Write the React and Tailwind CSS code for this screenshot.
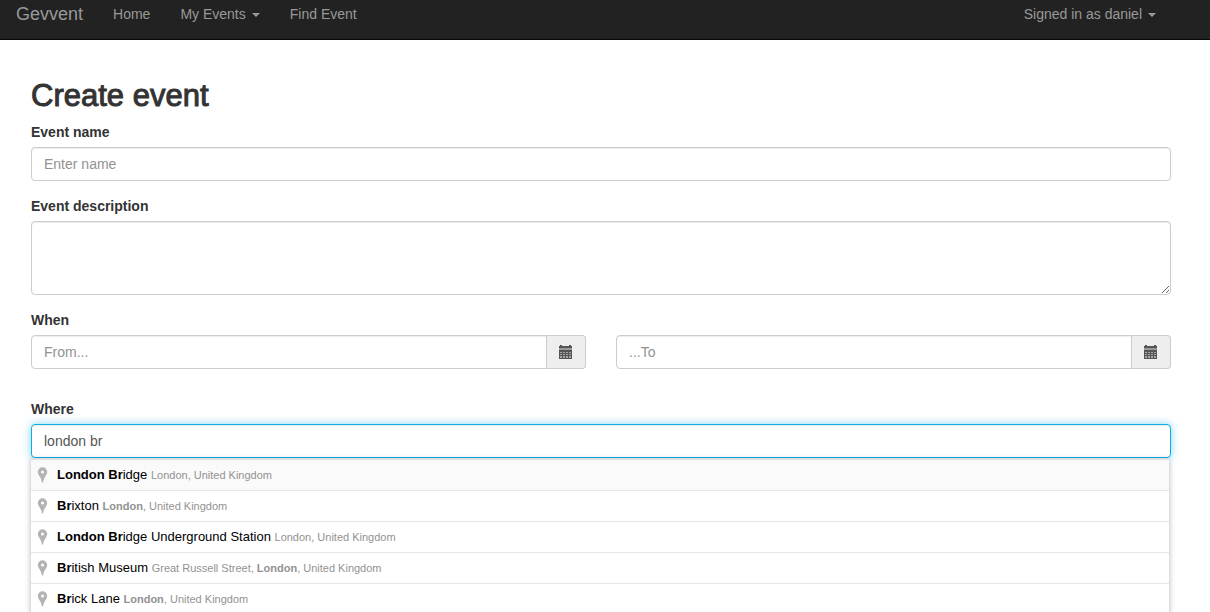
const places = [
  { name: [["London Br", true], ["idge", false]], area: [["London, United Kingdom", false]], active: true },
  { name: [["Br", true], ["ixton", false]], area: [["London", true], [", United Kingdom", false]] },
  { name: [["London Br", true], ["idge Underground Station", false]], area: [["London, United Kingdom", false]] },
  { name: [["Br", true], ["itish Museum", false]], area: [["Great Russell Street, ", false], ["London", true], [", United Kingdom", false]] },
  { name: [["Br", true], ["ick Lane", false]], area: [["London", true], [", United Kingdom", false]] },
];

const label = "mb-[5px] block font-bold";
const control =
  "block w-full rounded border border-[#ccc] bg-white px-3 text-[#555] shadow-[inset_0_1px_1px_rgba(0,0,0,0.075)] outline-none placeholder:text-[#929292]";

function Caret() {
  return (
    <svg className="ml-1.5 inline-block h-1 w-2 align-middle" viewBox="0 0 8 4" fill="currentColor" aria-hidden="true">
      <path d="M0 0h8L4 4z" />
    </svg>
  );
}

function CalendarIcon() {
  return (
    <svg className="h-[14px] w-[14px]" viewBox="0 0 14 14" aria-hidden="true">
      <path d="M1 0h2v1h7V0h2v1h1v2H0V1h1z" fill="#555" />
      <path d="M0 3h13v2H0z" fill="#999" />
      <path d="M0 5h13v9H0z" fill="#555" />
      <path
        d="M1 7h2v1H1zM4 7h2v1H4zM7 7h2v1H7zM10 7h2v1h-2zM1 9h2v1H1zM4 9h2v1H4zM7 9h2v1H7zM10 9h2v1h-2zM1 11h2v2H1zM4 11h2v2H4zM7 11h2v2H7zM10 11h2v2h-2z"
        fill="#a5a5a5"
      />
    </svg>
  );
}

function PinIcon() {
  return (
    <svg className="h-4 w-[11px] shrink-0" viewBox="0 0 11 16" fill="#b3b3b3" aria-hidden="true">
      <path
        fillRule="evenodd"
        d="M5.500 0.300A4.700 4.700 0 0 0 .8 5c0 2 1.200 3.200 2.200 4.900C4 11.600 4.700 13 4.900 15.500h1.200C6.300 13 7 11.600 8 9.900 9 8.200 10.200 7 10.200 5A4.700 4.700 0 0 0 5.500.3zM5.500 3.500a1.500 1.500 0 1 1 0 3 1.500 1.500 0 0 1 0-3z"
      />
    </svg>
  );
}

function Parts({ parts }) {
  return parts.map(([text, strong]) => (strong ? <b key={text}>{text}</b> : <span key={text}>{text}</span>));
}

function DateField({ id, placeholder, title }) {
  return (
    <div className="flex">
      <input id={id} aria-label={title} type="text" placeholder={placeholder} className={`${control} h-[34px] min-w-0 flex-1 rounded-r-none`} />
      <button
        type="button"
        aria-label={`Open calendar: ${title}`}
        className="flex h-[34px] w-[39px] items-center justify-start rounded-r border border-l-0 border-[#ccc] bg-[#eee] pl-3"
      >
        <CalendarIcon />
      </button>
    </div>
  );
}

export default function App() {
  return (
    <div className="min-h-screen overflow-hidden bg-white font-['Liberation_Sans',Arial,sans-serif] text-sm leading-5 text-[#333]">
      <nav className="flex items-center border-b border-[#080808] bg-[#222] pt-1 pr-[39px] pb-[15px] pl-px text-[#999]">
        <a href="#" className="px-[15px] text-lg leading-5">Gevvent</a>
        <a href="#" className="px-[15px]">Home</a>
        <button type="button" className="px-[15px]">My Events<Caret /></button>
        <a href="#" className="px-[15px]">Find Event</a>
        <button type="button" className="ml-auto px-[15px]">Signed in as daniel<Caret /></button>
      </nav>

      <main className="pt-[39px] pr-[39px] pl-[31px]">
        <h1 className="mb-[10px] text-[31px] leading-[33px] font-medium [-webkit-text-stroke:1px_#333]">Create event</h1>
        <form>
          <div className="mb-[15px]">
            <label htmlFor="name" className={label}>Event name</label>
            <input id="name" type="text" placeholder="Enter name" className={`${control} h-[34px]`} />
          </div>
          <div className="mb-[15px]">
            <label htmlFor="description" className={label}>Event description</label>
            <textarea id="description" rows={3} className={`${control} h-[74px] resize-y py-1.5`} />
          </div>
          <div className="mb-[30px]">
            <label htmlFor="from" className={label}>When</label>
            <div className="grid grid-cols-2 gap-[30px]">
              <DateField id="from" title="From" placeholder="From..." />
              <DateField id="to" title="To" placeholder="...To" />
            </div>
          </div>
          <div className="relative">
            <label htmlFor="where" className={label}>Where</label>
            <input
              id="where"
              type="text"
              defaultValue="london br"
              className="relative block h-[34px] w-full rounded border border-[#0caee6] bg-white px-3 text-[#555] shadow-[inset_0_1px_1px_rgba(0,0,0,0.075),0_0_8px_rgba(12,174,230,0.5)] outline-none"
            />
            <ul className="absolute top-full right-0.5 left-0 divide-y divide-[#e6e6e6] border-t-2 border-[#e0e0e0] bg-white text-[13px] leading-[30px] text-black shadow-[0_2px_6px_rgba(0,0,0,0.3)]">
              {places.map((place, i) => (
                <li
                  key={i}
                  className={`flex items-center gap-[9px] px-1.5 ${place.active ? "bg-[#fafafa]" : ""}`}
                >
                  <PinIcon />
                  <div className="truncate">
                    <Parts parts={place.name} />{" "}
                    <span className="text-[11px] text-[#929292]"><Parts parts={place.area} /></span>
                  </div>
                </li>
              ))}
            </ul>
          </div>
        </form>
      </main>
    </div>
  );
}
